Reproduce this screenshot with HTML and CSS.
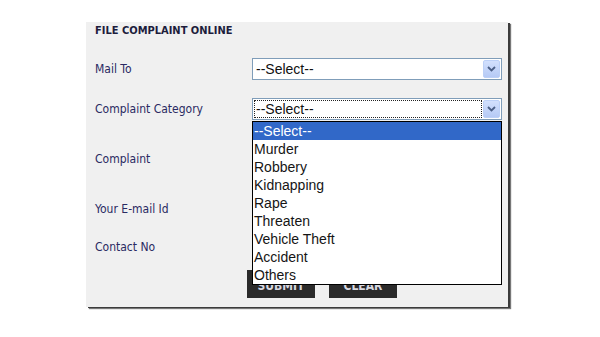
FILE: index.html
```html
<!DOCTYPE html>
<html>
<head>
<meta charset="utf-8">
<link rel="stylesheet" href="styles.css">
</head>
<body>
<div class="page">
  <div class="panel">
    <div class="title">FILE COMPLAINT ONLINE</div>
    <div class="row r-mail">
      <div class="label">Mail To</div>
      <div class="select"><span class="val">--Select--</span><span class="arrow"><svg width="9" height="6" viewBox="0 0 9 6"><path d="M1 1 L4.5 4.5 L8 1" fill="none" stroke="#4b5f86" stroke-width="1.8"/></svg></span></div>
    </div>
    <div class="row r-cat">
      <div class="label">Complaint Category</div>
      <div class="field">
        <div class="select"><span class="val focus">--Select--</span><span class="arrow"><svg width="9" height="6" viewBox="0 0 9 6"><path d="M1 1 L4.5 4.5 L8 1" fill="none" stroke="#4b5f86" stroke-width="1.8"/></svg></span></div>
        <ul class="list">
          <li class="sel">--Select--</li>
          <li>Murder</li>
          <li>Robbery</li>
          <li>Kidnapping</li>
          <li>Rape</li>
          <li>Threaten</li>
          <li>Vehicle Theft</li>
          <li>Accident</li>
          <li>Others</li>
        </ul>
      </div>
    </div>
    <div class="row r-comp">
      <div class="label">Complaint</div>
      <div class="box tall"></div>
    </div>
    <div class="row r-mailid">
      <div class="label">Your E-mail Id</div>
      <div class="box"></div>
    </div>
    <div class="row r-contact">
      <div class="label">Contact No</div>
      <div class="box"></div>
    </div>
    <div class="buttons">
      <div class="btn">SUBMIT</div>
      <div class="btn">CLEAR</div>
    </div>
  </div>
</div>
</body>
</html>
```

FILE: styles.css
```css
html, body {
  margin: 0;
  padding: 0;
  background: #ffffff;
}
.page {
  width: 600px;
  height: 337px;
  padding: 22px 0 0 86px;
  box-sizing: border-box;
  overflow: hidden;
}
.panel {
  width: 422px;
  height: 285px;
  box-sizing: border-box;
  background: #f0f0f0;
  padding: 0 0 0 9px;
  box-shadow: 2px 1px 0 #3c3c3c, 3px 2px 1px #777;
  font-family: "DejaVu Sans Condensed", "DejaVu Sans", sans-serif;
  font-stretch: condensed;
  font-size: 12px;
  color: #2a2a62;
}
.title {
  height: 18px;
  line-height: 18px;
  font-weight: bold;
  font-size: 11px;
  color: #1d1d3c;
}
.row {
  display: flex;
  align-items: center;
}
.label {
  width: 157px;
  flex: none;
}
.r-mail { margin-top: 18px; height: 22px; }
.r-cat { margin-top: 18px; height: 22px; }
.r-comp { margin-top: 9px; height: 60px; }
.r-mailid { margin-top: 10px; height: 20px; }
.r-contact { margin-top: 18px; height: 20px; }
.field {
  position: relative;
}
.select {
  width: 250px;
  height: 22px;
  box-sizing: border-box;
  border: 1px solid #7f9db9;
  background: #fff;
  display: flex;
  align-items: stretch;
  padding: 1px;
  font-family: "Liberation Sans", Arial, sans-serif;
  font-stretch: normal;
  font-size: 14px;
  color: #111;
}
.val {
  flex: 1;
  line-height: 18px;
  padding-left: 2px;
}
.val.focus {
  outline: 1px dotted #222;
  outline-offset: -1px;
  margin-right: 1px;
}
.arrow {
  width: 17px;
  flex: none;
  box-sizing: border-box;
  border: 1px solid #bcd0f7;
  border-radius: 2px;
  background: linear-gradient(#d2e0fd, #b6caf5);
  display: flex;
  align-items: center;
  justify-content: center;
}
.list {
  position: absolute;
  left: 0;
  top: 23px;
  width: 250px;
  box-sizing: border-box;
  margin: 0;
  padding: 0;
  list-style: none;
  border: 1px solid #000;
  background: #fff;
  font-family: "Liberation Sans", Arial, sans-serif;
  font-stretch: normal;
  font-size: 14px;
  line-height: 18px;
  color: #151515;
  z-index: 2;
}
.list li {
  padding-left: 1px;
  height: 18px;
}
.list li.sel {
  background: #3168c8;
  color: #fff;
}
.box {
  width: 250px;
  height: 20px;
  box-sizing: border-box;
  border: 1px solid #7f9db9;
  background: #fff;
}
.box.tall { height: 60px; }
.buttons {
  margin-top: 13px;
  padding-left: 152px;
  display: flex;
  gap: 14px;
}
.btn {
  width: 68px;
  height: 28px;
  background: #2b2b2b;
  color: #d8d8e0;
  font-weight: bold;
  font-size: 12px;
  line-height: 28px;
  text-align: center;
  padding-top: 2px;
  box-sizing: border-box;
}
```
